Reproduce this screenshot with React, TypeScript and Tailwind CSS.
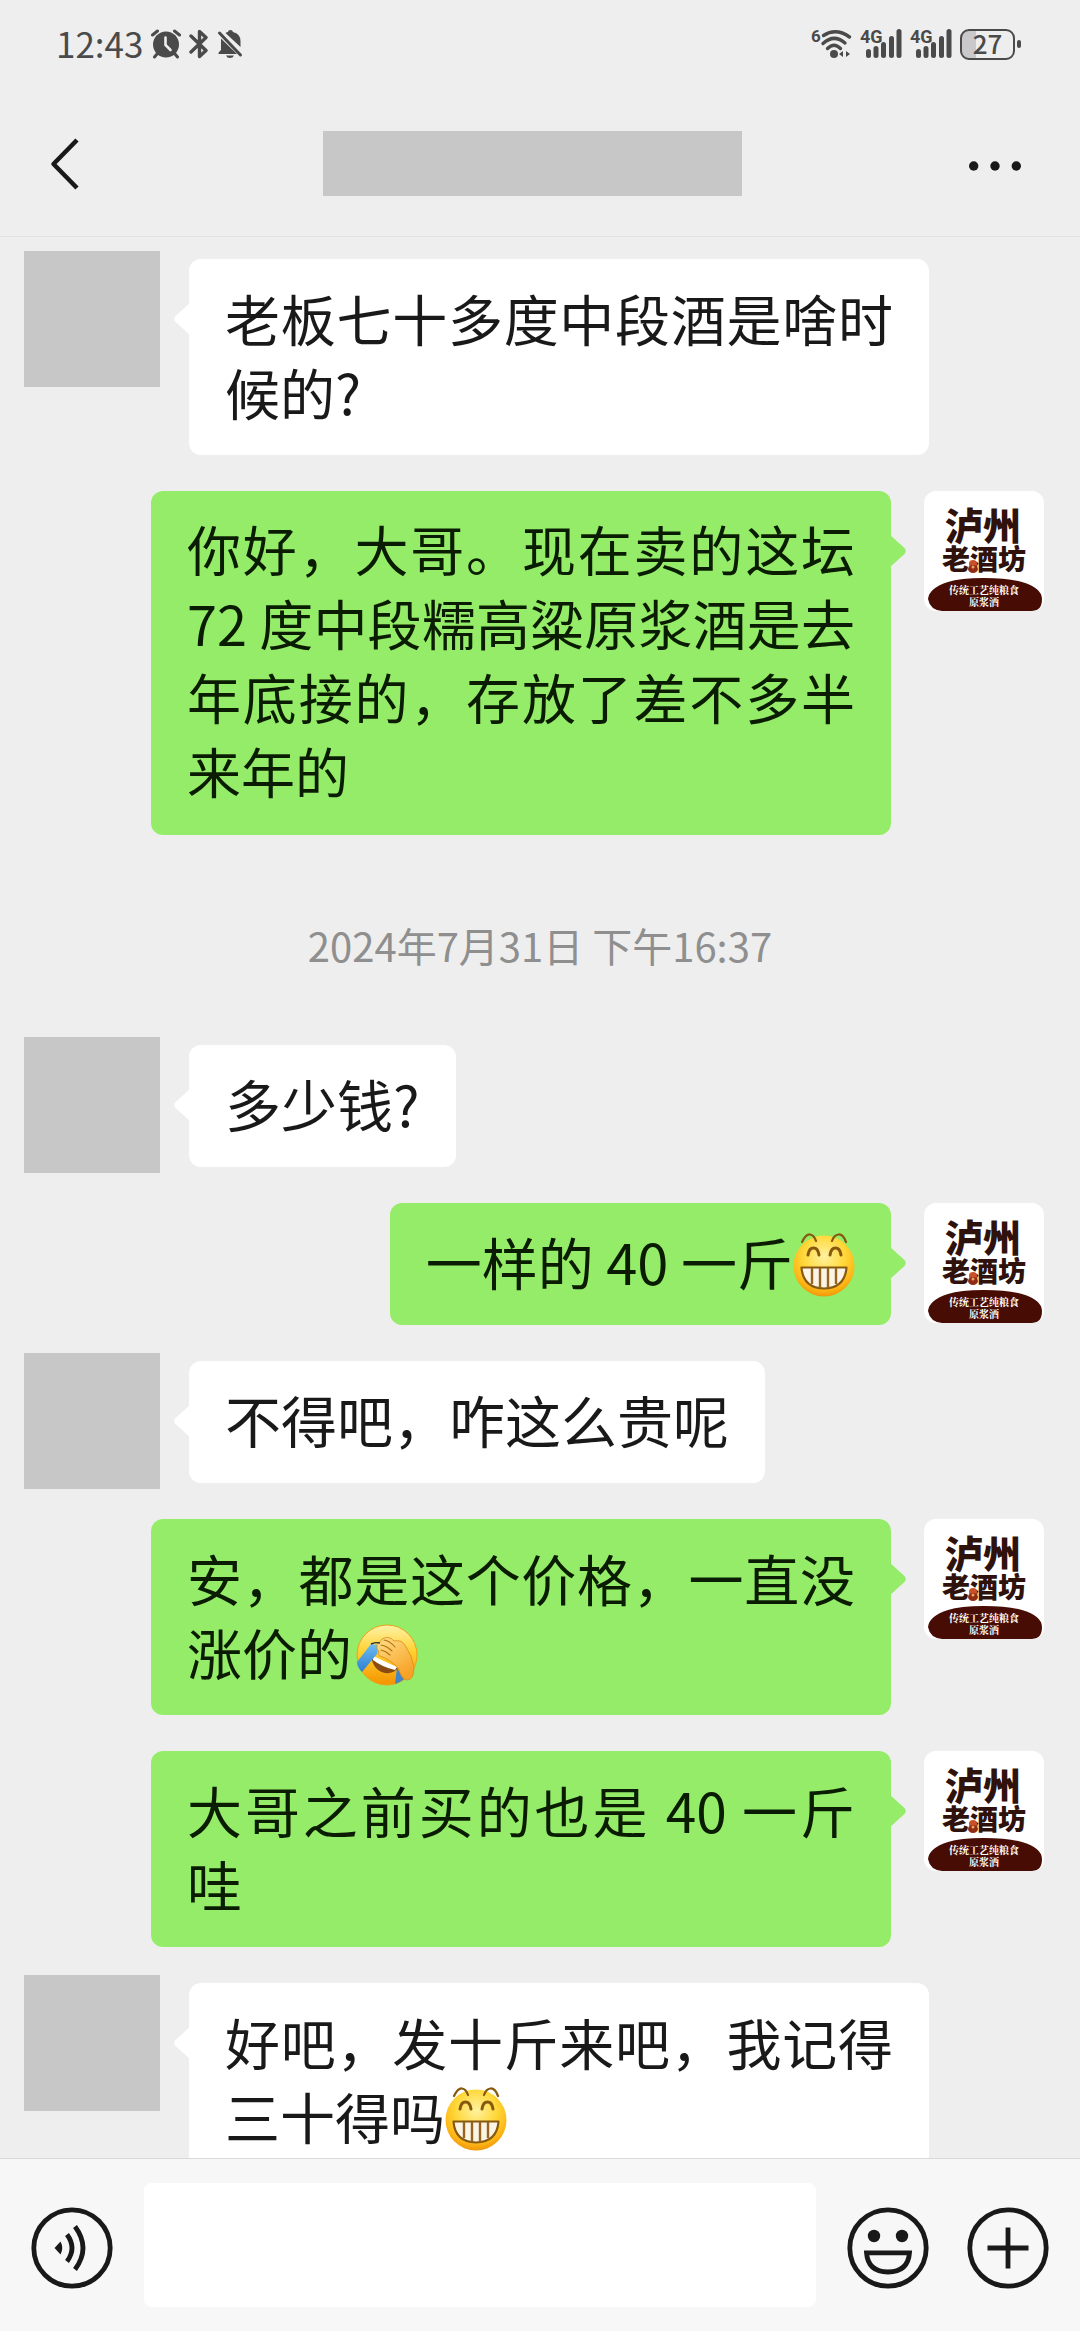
import type { ReactNode } from 'react';

function GrinEmoji() {
  return (
    <svg viewBox="0 0 62 64" role="img" aria-label="呲牙" className="inline-block h-16 w-[62px] align-[-12px]">
      <defs>
        <radialGradient id="grinFace" cx="50%" cy="34%" r="68%">
          <stop offset="0" stopColor="#fff2a0" />
          <stop offset="0.5" stopColor="#ffd83a" />
          <stop offset="0.82" stopColor="#fdb515" />
          <stop offset="1" stopColor="#ee9108" />
        </radialGradient>
      </defs>
      <circle cx="31" cy="33" r="30.5" fill="url(#grinFace)" />
      <g fill="none" stroke="#87590f" strokeWidth="2.2" strokeLinecap="round">
        <path d="M9 9Q13 1 17 1.5Q21 2 23 8" />
        <path d="M39 8Q41 2 45.5 1.5Q50 1 53 9" />
      </g>
      <g fill="none" stroke="#87590f" strokeWidth="3" strokeLinecap="round">
        <path d="M15 22Q16 15 20.5 15Q25 15 26 22" />
        <path d="M37 22Q38 15 42.5 15Q47 15 48 22" />
      </g>
      <path d="M8.5 34.5H53.5Q52 55 31 55.5Q10 55 8.5 34.5Z" fill="#fbf4e6" stroke="#87590f" strokeWidth="2.2" strokeLinejoin="round" />
      <path d="M19 35V51M27 35V55M35 35V55M43 35V51" stroke="#94661d" strokeWidth="2.4" />
    </svg>
  );
}

function FacepalmEmoji() {
  return (
    <svg viewBox="0 0 62 62" role="img" aria-label="捂脸" className="ml-1 inline-block size-[62px] align-[-11px]">
      <defs>
        <linearGradient id="palmFace" x1="0" y1="0" x2="0" y2="1">
          <stop offset="0" stopColor="#fff3a8" />
          <stop offset="0.45" stopColor="#ffd02e" />
          <stop offset="1" stopColor="#f59300" />
        </linearGradient>
        <linearGradient id="palmHand" x1="0" y1="0" x2="0.6" y2="1">
          <stop offset="0" stopColor="#ffe08a" />
          <stop offset="1" stopColor="#f7a226" />
        </linearGradient>
        <linearGradient id="palmTear" x1="0" y1="0" x2="0" y2="1">
          <stop offset="0" stopColor="#6bbcf0" />
          <stop offset="1" stopColor="#2f7fd0" />
        </linearGradient>
      </defs>
      <circle cx="31" cy="31" r="30" fill="url(#palmFace)" stroke="#eda21a" />
      <path d="M15 33L42 44Q38 50 29 49Q18 47 15 33Z" fill="#8a4b12" />
      <path d="M17 32L41 43L39 46Q26 43 17 36Z" fill="#fff" />
      <path d="M15 20L23 21L21 30L6 48Q1 43 1 38Z" fill="url(#palmTear)" />
      <path d="M41 44L39 60Q45 58 48 55Z" fill="#3f86c9" />
      <path d="M21 20Q24 19 26 15Q33 11 38 17Q46 15 50 23Q56 31 58 43Q58 56 51 56Q45 55 43 45Q34 35 24 32Q21 31 23 28Q20 25 21 20Z" fill="url(#palmHand)" stroke="#d98a1c" strokeWidth="0.8" />
      <path d="M15 20Q20 18 24 19" fill="none" stroke="#33302a" strokeWidth="1.4" />
      <path d="M28 16Q34 17 39 23M25 21Q31 22 36 27M25 26Q30 27 34 31" fill="none" stroke="#b56f15" strokeWidth="1.1" strokeLinecap="round" />
    </svg>
  );
}

function ShopAvatar() {
  return (
    <svg viewBox="0 0 120 120" role="img" aria-label="泸州老酒坊" className="size-[120px] shrink-0 rounded-xl bg-white">
      <g fill="#2f120b" textAnchor="middle" className="font-black">
        <text x="59" y="49" fontSize="38">泸州</text>
        <text x="60" y="79" fontSize="28">老酒坊</text>
      </g>
      <circle cx="49" cy="73" r="4" fill="#c9502b" />
      <ellipse cx="49" cy="78" rx="5" ry="4" fill="#8e2c14" />
      <circle cx="49" cy="76" r="1.5" fill="#f0a060" />
      <path d="M4 108Q5 97 24 91Q36 87 60 87Q84 87 98 91Q118 97 118 108Q118 120 108 120H18Q6 119 4 108Z" fill="#470d04" />
      <g fill="#fff" textAnchor="middle" className="font-['Noto_Serif_CJK_SC','Noto_Sans_CJK_SC',serif] font-bold">
        <text x="60" y="103" fontSize="10">传统工艺纯粮食</text>
        <text x="60" y="115" fontSize="10">原浆酒</text>
      </g>
    </svg>
  );
}

type BubbleSize = 'short' | 'long' | 'dense';

const bubbleText: Record<BubbleSize, string> = {
  short: 'text-[56px]',
  long: 'text-[55px]',
  dense: 'text-[54px]',
};

function Received({ size, children }: { size: BubbleSize; children: ReactNode }) {
  return (
    <li className="flex items-start gap-[29px] pl-6">
      <div className="-my-2 size-[136px] shrink-0 bg-[#c7c7c7]" />
      <div className="relative max-w-[740px] rounded-xl bg-white px-9 pt-[21px] pb-[27px] text-[#191919]">
        <svg viewBox="0 0 17 34" className="absolute top-[43px] -left-[15px] h-[34px] w-[17px]" aria-hidden="true">
          <path d="M17 0L1.5 14Q-1 17 1.5 20L17 34Z" fill="#fff" />
        </svg>
        <p className={`${bubbleText[size]} text-justify leading-[74px]`}>{children}</p>
      </div>
    </li>
  );
}

function Sent({ size, children }: { size: BubbleSize; children: ReactNode }) {
  return (
    <li className="flex items-start justify-end gap-[33px] pr-9">
      <div className="relative max-w-[740px] rounded-xl bg-[#95ec69] px-9 pt-[21px] pb-[27px] text-[#0a1c02]">
        <svg viewBox="0 0 17 34" className="absolute top-[43px] -right-[15px] h-[34px] w-[17px]" aria-hidden="true">
          <path d="M0 0L15.5 14Q18 17 15.5 20L0 34Z" fill="#95ec69" />
        </svg>
        <p className={`${bubbleText[size]} text-justify leading-[74px]`}>{children}</p>
      </div>
      <ShopAvatar />
    </li>
  );
}

function SignalIcon() {
  return (
    <svg viewBox="0 0 42 30" className="h-[30px] w-[42px] overflow-visible" fill="#4a4a4a" aria-label="4G">
      <text x="0" y="14" fontSize="18" className="font-[Roboto] font-bold">4G</text>
      <rect x="6" y="20" width="5" height="9" rx="2.5" />
      <rect x="13.5" y="17" width="5" height="12" rx="2.5" />
      <rect x="21" y="13" width="5" height="16" rx="2.5" />
      <rect x="29" y="7" width="5" height="22" rx="2.5" />
      <rect x="36.5" y="0" width="5" height="29" rx="2.5" />
    </svg>
  );
}

function StatusBar() {
  return (
    <div className="flex h-[88px] items-center justify-between pr-[59px] pl-14 text-[#4a4a4a]">
      <div className="flex items-center gap-2">
        <span className="pb-0.5 text-[35px] leading-[44px]">12:43</span>
        <svg viewBox="0 0 30 30" className="size-[30px]" aria-label="闹钟">
          <circle cx="15" cy="15.5" r="13" fill="#4a4a4a" />
          <path d="M6 25L3.5 28M24 25L26.5 28" stroke="#4a4a4a" strokeWidth="3" strokeLinecap="round" />
          <path d="M1.5 6L6.5 2M28.5 6L23.5 2" stroke="#4a4a4a" strokeWidth="3" strokeLinecap="round" />
          <path d="M14.5 8.5V16L19.500 21" fill="none" stroke="#eee" strokeWidth="2.6" strokeLinecap="round" />
        </svg>
        <svg viewBox="0 0 20 30" className="h-[30px] w-5" fill="none" stroke="#4a4a4a" strokeWidth="3.4" strokeLinejoin="round" strokeLinecap="round" aria-label="蓝牙">
          <path d="M2 7L17 21.5L10.5 27.5V18M10.5 12V2.5L17 8.5L2 23" />
        </svg>
        <svg viewBox="0 0 26 30" className="h-[30px] w-[26px]" fill="#4a4a4a" aria-label="静音">
          <path d="M8.500 4Q10 3 11 3Q11 1 13.500 1Q15.500 1 16 3Q23.500 5 23.500 12V18Z" />
          <path d="M4 9.500L20 25H1.500Q1 23.500 4 21Z" />
          <path d="M9 26.500H17Q16 29 13 29Q10 29 9 26.500Z" />
          <path d="M2.500 4L23.500 26" stroke="#4a4a4a" strokeWidth="3" strokeLinecap="round" />
        </svg>
      </div>
      <div className="flex items-center gap-2">
        <svg viewBox="0 0 40 30" className="h-[30px] w-10 overflow-visible" fill="none" stroke="#4a4a4a" strokeLinecap="round" aria-label="Wi-Fi 6">
          <text x="-1" y="13" fontSize="17" fill="#4a4a4a" stroke="none" className="font-[Roboto] font-bold">6</text>
          <path d="M11.5 6.5Q24 -1.5 37.5 8" strokeWidth="3.4" />
          <path d="M11 14.5Q22 4.5 33 14" strokeWidth="3.4" />
          <path d="M15.5 19.5Q22 13 28.5 19.5" strokeWidth="3.4" />
          <circle cx="22" cy="25" r="4" fill="#4a4a4a" stroke="none" />
          <path d="M27 25L31 22V28ZM38 25L34 22V28Z" fill="#4a4a4a" stroke="none" />
        </svg>
        <SignalIcon />
        <SignalIcon />
        <div className="flex items-center gap-0.5">
          <div className="flex h-[31px] w-[55px] items-center justify-center rounded-[9px] border-2 border-[#4a4a4a] bg-linear-to-r from-[#cbc8cb] from-27% to-transparent to-27% pb-0.5 text-[26px] leading-[26px] font-medium">
            27
          </div>
          <div className="h-2 w-1 rounded-full bg-[#4a4a4a]" />
        </div>
      </div>
    </div>
  );
}

export default function App() {
  return (
    <div lang="zh-CN" className="flex h-screen flex-col bg-[#eeeeee] font-['Noto_Sans_CJK_SC',sans-serif]">
      <header className="shrink-0 border-b border-[#e1e1e1]">
        <StatusBar />
        <nav className="flex h-[148px] items-center justify-between pr-[59px] pl-[43px]">
          <button type="button" aria-label="返回" className="flex w-20 justify-start pt-1 pl-[5px]">
            <svg viewBox="0 0 34 54" className="h-[54px] w-[34px]" fill="none" stroke="#191919" strokeWidth="4.5" strokeLinejoin="round">
              <path d="M29 3L5.5 27L29 51" />
            </svg>
          </button>
          <div className="mt-0.5 h-[65px] w-[419px] bg-[#c7c7c7]" />
          <button type="button" aria-label="更多" className="flex w-20 justify-end pt-2">
            <svg viewBox="0 0 52 12" className="h-3 w-[52px]" fill="#191919">
              <circle cx="4.7" cy="6" r="4.7" />
              <circle cx="26" cy="6" r="4.7" />
              <circle cx="47.3" cy="6" r="4.7" />
            </svg>
          </button>
        </nav>
      </header>

      <main className="min-h-0 flex-1 overflow-hidden">
        <ul className="flex flex-col gap-9 pt-[22px]">
          <Received size="long">老板七十多度中段酒是啥时候的?</Received>
          <Sent size="dense">你好，大哥。现在卖的这坛72 度中段糯高粱原浆酒是去年底接的，存放了差不多半来年的</Sent>
          <li className="pt-[49px] pb-[39px] text-center text-[40px] leading-[50px] text-[#8f8f8f]">
            <time dateTime="2024-07-31T16:37">2024年7月31日 下午16:37</time>
          </li>
          <Received size="short">多少钱?</Received>
          <Sent size="short">
            一样的 40 一斤<GrinEmoji />
          </Sent>
          <Received size="short">不得吧，咋这么贵呢</Received>
          <Sent size="long">
            安，都是这个价格，一直没涨价的<FacepalmEmoji />
          </Sent>
          <Sent size="long">大哥之前买的也是 40 一斤哇</Sent>
          <Received size="long">
            好吧，发十斤来吧，我记得三十得吗<GrinEmoji />
          </Received>
        </ul>
      </main>

      <footer className="flex shrink-0 items-end border-t border-[#d8d8d8] bg-[#f7f7f7] pt-6 pr-[31px] pb-6 pl-[31px]">
        <button type="button" aria-label="语音输入" className="shrink-0 pb-[18px]">
          <svg viewBox="0 0 82 82" className="size-[82px]" fill="none" stroke="#191919" strokeWidth="4.8">
            <circle cx="41" cy="41" r="38.2" />
            <path d="M23.5 41L29.5 34.5Q33 41 29.5 47.5Z" fill="#191919" stroke="none" />
            <path d="M36 27.5Q46 41 36 54.5M44 19.5Q60 41 44 62.5" />
          </svg>
        </button>
        <input type="text" aria-label="输入消息" className="mx-[31px] h-[124px] min-w-0 flex-1 rounded-lg bg-white px-6 text-[56px] outline-none" />
        <div className="flex shrink-0 gap-[38px] pb-[18px]">
          <button type="button" aria-label="表情">
            <svg viewBox="0 0 82 82" className="size-[82px]" fill="none" stroke="#191919" strokeWidth="4.8">
              <circle cx="41" cy="41" r="38.2" />
              <circle cx="27" cy="29" r="6.2" fill="#191919" stroke="none" />
              <circle cx="55" cy="29" r="6.2" fill="#191919" stroke="none" />
              <path d="M19.5 45.8H62.5Q61 65 41 65Q21 65 19.5 45.8Z" />
            </svg>
          </button>
          <button type="button" aria-label="更多功能">
            <svg viewBox="0 0 82 82" className="size-[82px]" fill="none" stroke="#191919" strokeWidth="4.8">
              <circle cx="41" cy="41" r="38.2" />
              <path d="M20.5 41H61.5M41 20.5V61.5" />
            </svg>
          </button>
        </div>
      </footer>
    </div>
  );
}
